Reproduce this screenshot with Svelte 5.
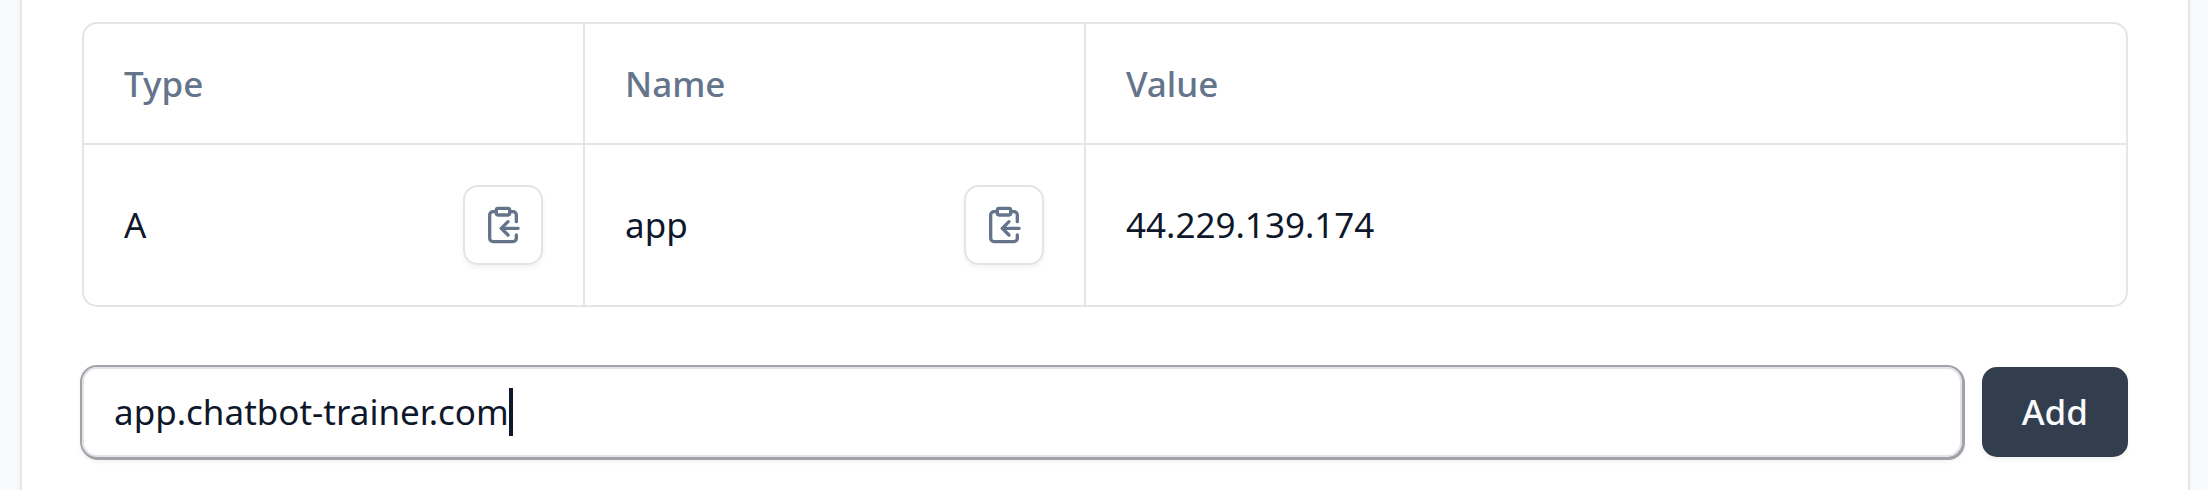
<script>
  let domain = $state('app.chatbot-trainer.com');
  const records = [{ type: 'A', name: 'app', value: '44.229.139.174' }];

  function copy(text) {
    navigator.clipboard?.writeText(text);
  }
</script>

{#snippet copyCell(text, label)}
  <td>
    <div class="cell">
      <span>{text}</span>
      <button class="copy" type="button" aria-label={label} onclick={() => copy(text)}>
        <svg viewBox="0 0 24 24" aria-hidden="true">
          <rect width="8" height="4" x="8" y="2" rx="1" ry="1" />
          <path d="M8 4H6a2 2 0 0 0-2 2v14a2 2 0 0 0 2 2h12a2 2 0 0 0 2-2v-2" />
          <path d="M16 4h2a2 2 0 0 1 2 2v4" />
          <path d="M21 14H11" />
          <path d="m15 10-4 4 4 4" />
        </svg>
      </button>
    </div>
  </td>
{/snippet}

<main class="card">
  <div class="records">
    <table>
      <thead>
        <tr>
          <th class="fixed" scope="col">Type</th>
          <th class="fixed" scope="col">Name</th>
          <th scope="col">Value</th>
        </tr>
      </thead>
      <tbody>
        {#each records as record}
          <tr>
            {@render copyCell(record.type, 'Copy type')}
            {@render copyCell(record.name, 'Copy name')}
            <td>{record.value}</td>
          </tr>
        {/each}
      </tbody>
    </table>
  </div>

  <form onsubmit={(e) => e.preventDefault()}>
    <label class="field">
      <input type="text" aria-label="Domain" spellcheck="false" bind:value={domain} />
      <span class="caret"></span>
    </label>
    <button class="add" type="submit">Add</button>
  </form>
</main>

<style>
  :global(body) {
    background: #f8fafc;
  }

  .card {
    box-sizing: border-box;
    min-height: 100vh;
    margin: 0 18px 0 20px;
    padding: 22px 60px 32px;
    border: solid #e5e7eb;
    border-width: 0 2px;
    background: #fff;
    box-shadow: 0 3px 5px rgb(0 0 0 / 0.05);
    color: #0f172a;
    font: 400 35px/50px 'Noto Sans', sans-serif;
  }

  .records {
    border: 2px solid #e4e4e9;
    border-radius: 15px;
    overflow: hidden;
  }

  table {
    width: 100%;
    table-layout: fixed;
    border-collapse: separate;
    border-spacing: 0;
  }

  th,
  td {
    box-sizing: border-box;
    padding: 0 40px;
    text-align: left;
    vertical-align: middle;
  }

  th {
    height: 121px;
    border-bottom: 2px solid #e4e4e9;
    color: #64748b;
    font-weight: 500;
  }

  td {
    height: 160px;
  }

  .fixed {
    width: 501px;
  }

  th:not(:last-child),
  td:not(:last-child) {
    border-right: 2px solid #e4e4e9;
  }

  .cell {
    display: flex;
    align-items: center;
    justify-content: space-between;
  }

  button {
    padding: 0;
    border: 0;
    font: inherit;
    cursor: pointer;
    border-radius: 15px;
    box-shadow: 0 3px 5px rgb(0 0 0 / 0.05);
  }

  .copy {
    display: grid;
    place-items: center;
    box-sizing: border-box;
    width: 80px;
    height: 80px;
    border: 2px solid #e4e4e4;
    background: #fff;
    color: #64748b;
  }

  .copy svg {
    width: 40px;
    height: 40px;
    fill: none;
    stroke: currentColor;
    stroke-width: 2;
    stroke-linecap: round;
    stroke-linejoin: round;
  }

  form {
    display: flex;
    gap: 20px;
    margin-top: 60px;
  }

  .field {
    flex: 1;
    display: flex;
    align-items: center;
    box-sizing: border-box;
    height: 90px;
    padding: 0 30px;
    border: 2px solid #e4e4e7;
    border-radius: 15px;
    box-shadow:
      0 0 0 2px #a1a1aa,
      1px 1px 0 2px #a1a1aa,
      0 3px 5px 2px rgb(0 0 0 / 0.05);
  }

  input {
    field-sizing: content;
    max-width: 100%;
    height: 50px;
    padding: 0;
    border: 0;
    outline: 0;
    background: none;
    color: inherit;
    font: inherit;
    caret-color: transparent;
  }

  .caret {
    width: 4px;
    height: 48px;
    background: #0f172a;
  }

  .add {
    height: 90px;
    padding: 0 40px;
    background: #323e4e;
    color: #f8fafc;
    font-weight: 500;
  }
</style>
